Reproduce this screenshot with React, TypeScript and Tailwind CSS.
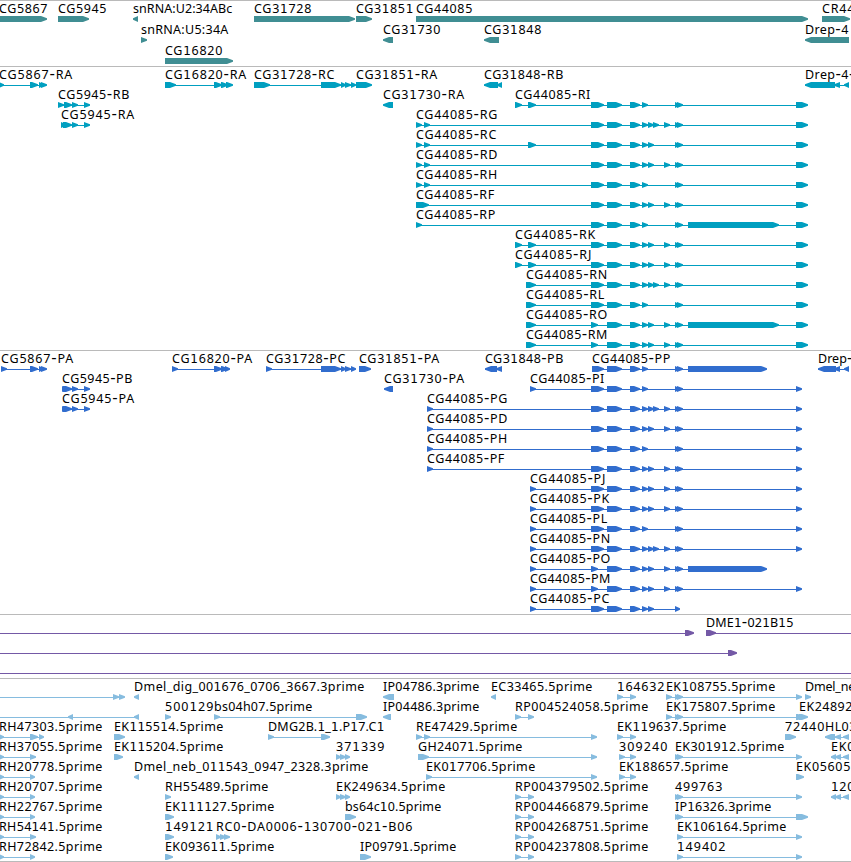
import React from "react";

/** start, end, text: the label is fitted between start and end. */
type Label = [number, number, string];
/** start, end of one exon. */
type Span = [number, number];
interface Feature {
  exons: Span[];
  reverse?: boolean;
  line?: Span;
}
interface Row {
  labels: Label[];
  features: Feature[];
}
interface Track {
  name: string;
  color: string;
  rowHeight: number;
  className: string;
  rows: Row[];
}

const fwd = (...exons: Span[]): Feature => ({ exons });
const rev = (...exons: Span[]): Feature => ({ exons, reverse: true });

const A: Span = [591, 604];
const A2: Span = [591, 598];
const B: Span = [607, 622];
const C: Span = [630, 640];
const D: Span = [642, 648];
const E: Span = [648, 654];
const F: Span = [653, 659];
const G: Span = [664, 670];
const H1: Span = [675, 680];
const H2: Span = [677, 683];
const END: Span = [796, 808];
const CDS_END: Span = [796, 802];
const BIG: Span = [688, 779];
const CDS_BIG: Span = [688, 767];
const S1: Span = [416, 422];
const S2: Span = [424, 430];
const M1: Span = [515, 522];
const M2: Span = [528, 536];
const N1: Span = [526, 536];
const P1: Span = [427, 433];
const P2: Span = [530, 536];

const row = (labels: Label[], ...features: Feature[]): Row => ({ labels, features });

const genes: Row[] = [
  row(
    [[-1, 47, "CG5867"], [58, 106, "CG5945"], [133, 232, "snRNA:U2:34ABc"], [254, 311, "CG31728"], [356, 413, "CG31851"], [416, 472, "CG44085"], [822, 854, "CR44"]],
    fwd([-9, 47]), fwd([58, 89]), rev([133, 138]), fwd([254, 355]), fwd([356, 372]), fwd([416, 808]), fwd([822, 850]),
  ),
  row(
    [[141, 228, "snRNA:U5:34A"], [383, 440, "CG31730"], [484, 541, "CG31848"], [805, 848, "Drep-4"]],
    fwd([141, 147]), rev([383, 393]), rev([484, 499]), rev([805, 849]),
  ),
  row([[165, 222, "CG16820"]], fwd([165, 233])),
];

const transcripts: Row[] = [
  row(
    [[-1, 72, "CG5867-RA"], [165, 246, "CG16820-RA"], [254, 334, "CG31728-RC"], [356, 437, "CG31851-RA"], [484, 563, "CG31848-RB"], [805, 854, "Drep-4-"]],
    fwd([-1, 4], [30, 38], [39, 44], [41, 47]),
    fwd([165, 176], [214, 222], [221, 228], [226, 233]),
    fwd([254, 270], [321, 341], [341, 346], [345, 351], [351, 356]),
    fwd([356, 372]),
    rev([484, 498], [497, 502]),
    rev([805, 835], [834, 840], [844, 849]),
  ),
  row([[58, 129, "CG5945-RB"], [383, 464, "CG31730-RA"], [515, 590, "CG44085-RI"]],
    fwd([58, 64], [64, 72], [72, 78], [84, 90]), rev([383, 393]), fwd(M1, M2, A, B, C, D, H1, H2, END)),
  row([[61, 134, "CG5945-RA"], [416, 497, "CG44085-RG"]],
    fwd([61, 66], [63, 72], [72, 78], [84, 90]), fwd(S1, S2, A, B, C, D, E, F, G, H1, H2, END)),
  row([[416, 496, "CG44085-RC"]], fwd(S1, S2, M2, A, B, C, D, E, H1, H2, END)),
  row([[416, 497, "CG44085-RD"]], fwd(S1, S2, A, B, C, D, E, G, H1, H2, END)),
  row([[416, 497, "CG44085-RH"]], fwd(S1, S2, A, B, C, D, H1, H2, END)),
  row([[416, 494, "CG44085-RF"]], fwd([416, 429], A, B, C, D, E, G, H1, H2, END)),
  row([[416, 495, "CG44085-RP"]], fwd(S1, A, B, C, D, H1, H2, BIG, END)),
  row([[515, 595, "CG44085-RK"]], fwd(M1, M2, A, B, C, D, E, G, H1, H2, END)),
  row([[515, 591, "CG44085-RJ"]], fwd(M1, M2, A, B, C, D, E, G, H1, H2, END)),
  row([[526, 607, "CG44085-RN"]], fwd(N1, A, B, C, D, E, F, G, H1, H2, END)),
  row([[526, 604, "CG44085-RL"]], fwd(N1, A, B, C, D, H1, H2, END)),
  row([[526, 607, "CG44085-RO"]], fwd(N1, A2, B, C, D, E, G, H1, H2, BIG, END)),
  row([[526, 607, "CG44085-RM"]], fwd(N1, A2, B, C, D, E, G, H1, H2, END)),
];

const proteins: Row[] = [
  row(
    [[1, 73, "CG5867-PA"], [172, 252, "CG16820-PA"], [266, 345, "CG31728-PC"], [359, 439, "CG31851-PA"], [485, 563, "CG31848-PB"], [592, 670, "CG44085-PP"], [818, 852, "Drep-"]],
    fwd([1, 7], [30, 38], [39, 44], [41, 47]),
    fwd([172, 178], [214, 222], [221, 228], [225, 230]),
    fwd([266, 272], [321, 341], [341, 346], [345, 351], [351, 356]),
    fwd([359, 371]),
    rev([485, 497], [496, 502]),
    fwd([592, 604], B, C, D, H1, H2, CDS_BIG),
    rev([818, 836], [834, 840], [844, 849]),
  ),
  row([[62, 132, "CG5945-PB"], [384, 464, "CG31730-PA"], [530, 604, "CG44085-PI"]],
    fwd([62, 67], [63, 72], [72, 78], [84, 90]), rev([384, 393]), fwd(P2, A, B, C, D, H1, H2, CDS_END)),
  row([[62, 134, "CG5945-PA"], [427, 507, "CG44085-PG"]],
    fwd([62, 67], [63, 72], [72, 78], [84, 90]), fwd(P1, A, B, C, D, E, F, G, H1, H2, CDS_END)),
  row([[427, 507, "CG44085-PD"]], fwd(P1, A, B, C, D, E, G, H1, H2, CDS_END)),
  row([[427, 507, "CG44085-PH"]], fwd(P1, A, B, C, D, H1, H2, CDS_END)),
  row([[427, 504, "CG44085-PF"]], fwd(P1, A, B, C, D, E, G, H1, H2, CDS_END)),
  row([[530, 605, "CG44085-PJ"]], fwd(P2, A, B, C, D, E, G, H1, H2, CDS_END)),
  row([[530, 609, "CG44085-PK"]], fwd(P2, A, B, C, D, E, G, H1, H2, CDS_END)),
  row([[530, 607, "CG44085-PL"]], fwd(P2, A, B, C, D, H1, H2, CDS_END)),
  row([[530, 610, "CG44085-PN"]], fwd(P2, A, B, C, D, E, F, G, H1, H2, CDS_END)),
  row([[530, 610, "CG44085-PO"]], fwd(P2, A2, B, C, D, E, G, H1, H2, CDS_BIG)),
  row([[530, 610, "CG44085-PM"]], fwd(P2, A2, B, C, D, E, G, H1, H2, CDS_END)),
  row([[530, 609, "CG44085-PC"]], fwd(P2, A, B, C, D, E, H1)),
];

const clones: Row[] = [
  row([[706, 793, "DME1-021B15"]],
    { exons: [[685, 694]], line: [0, 690] }, { exons: [[706, 716]], line: [710, 851] }),
  row([], { exons: [[728, 737]], line: [0, 733] }),
  row([], { exons: [], line: [0, 851] }),
];

const R1: Feature = fwd([515, 521], [528, 534]);
const K1: Feature = fwd([617, 623], [630, 636]);
const K2: Feature = fwd([619, 625], [630, 636]);
const HOME: Span = [-1, 4];

const ests: Row[] = [
  row(
    [[134, 364, "Dmel_dig_001676_0706_3667.3prime"], [383, 479, "IP04786.3prime"], [491, 592, "EC33465.5prime"], [617, 664, "164632"], [666, 775, "EK108755.5prime"], [805, 855, "Dmel_ne"]],
    { exons: [[113, 119], [119, 125]], line: [0, 121] }, rev([134, 139]), rev([383, 394]), rev([491, 496]), K1,
    fwd([666, 672], [675, 680], [677, 683], [796, 802]), fwd([805, 811]),
  ),
  row(
    [[165, 213, "500129"], [214, 312, "bs04h07.5prime"], [383, 479, "IP04486.3prime"], [515, 648, "RP004524058.5prime"], [666, 775, "EK175807.5prime"], [799, 852, "EK24892"]],
    { exons: [[68, 73], [134, 139]], reverse: true, line: [0, 136] }, fwd([165, 171]), fwd([214, 220], [356, 367]), rev([383, 391]), R1,
    fwd([666, 672], [675, 680], [677, 683], [796, 804], [799, 808]),
  ),
  row(
    [[-1, 102, "RH47303.5prime"], [114, 223, "EK115514.5prime"], [268, 384, "DMG2B.1_1.P17.C1"], [416, 517, "RE47429.5prime"], [617, 726, "EK119637.5prime"], [785, 824, "72440"], [825, 856, "HL03"]],
    fwd(HOME, [30, 38], [39, 44]), fwd([114, 125]), fwd([268, 274], [321, 330]), fwd([416, 422], [424, 430], [591, 597]), K1,
    fwd([785, 796]), rev([825, 835], [835, 841], [843, 849]),
  ),
  row(
    [[-1, 102, "RH37055.5prime"], [114, 223, "EK115204.5prime"], [336, 384, "371339"], [418, 522, "GH24071.5prime"], [619, 667, "309240"], [675, 784, "EK301912.5prime"], [831, 854, "EK0"]],
    fwd(HOME, [30, 36]), fwd([114, 123]), fwd([336, 341], [340, 346], [345, 350]), fwd([418, 429], [591, 597]), K2,
    fwd([675, 680], [677, 683], [796, 802]), rev([831, 836], [835, 841], [843, 849]),
  ),
  row(
    [[-1, 102, "RH20778.5prime"], [134, 368, "Dmel_neb_011543_0947_2328.3prime"], [426, 535, "EK017706.5prime"], [619, 728, "EK188657.5prime"], [796, 850, "EK05605"]],
    fwd(HOME, [30, 35]), rev([134, 139]), fwd([426, 432], [591, 597]), K2, fwd([796, 804]),
  ),
  row(
    [[-1, 102, "RH20707.5prime"], [165, 268, "RH55489.5prime"], [336, 445, "EK249634.5prime"], [515, 648, "RP004379502.5prime"], [675, 722, "499763"], [831, 854, "120"]],
    fwd(HOME, [30, 35]), fwd([165, 171]), fwd([336, 341], [340, 346], [345, 350]), R1,
    fwd([675, 680], [677, 683], [796, 802]), rev([831, 836], [835, 841], [843, 849]),
  ),
  row(
    [[-1, 102, "RH22767.5prime"], [165, 274, "EK111127.5prime"], [345, 441, "bs64c10.5prime"], [515, 648, "RP004466879.5prime"], [675, 771, "IP16326.3prime"]],
    fwd(HOME, [30, 35]), fwd([165, 174]), fwd([345, 356]), R1, fwd([675, 680], [677, 683], [796, 808]),
  ),
  row(
    [[-1, 102, "RH54141.5prime"], [165, 213, "149121"], [216, 412, "RC0-DA0006-130700-021-B06"], [515, 648, "RP004268751.5prime"], [677, 786, "EK106164.5prime"]],
    fwd(HOME, [30, 36]), fwd([165, 174]), fwd([216, 221], [220, 226], [224, 230]), R1, fwd([677, 683], [796, 802]),
  ),
  row(
    [[-1, 102, "RH72842.5prime"], [165, 274, "EK093611.5prime"], [360, 456, "IP09791.5prime"], [515, 648, "RP004237808.5prime"], [677, 725, "149402"]],
    fwd(HOME, [30, 35]), fwd([165, 173]), fwd([360, 371]), R1, fwd([677, 683], [796, 802]),
  ),
];

const tracks: Track[] = [
  { name: "genes", color: "#408e93", rowHeight: 21, className: "h-[66px]", rows: genes },
  { name: "transcripts", color: "#009fc0", rowHeight: 20, className: "h-[284px]", rows: transcripts },
  { name: "proteins", color: "#316dce", rowHeight: 20, className: "h-[264px]", rows: proteins },
  { name: "clones", color: "#7459a6", rowHeight: 20, className: "h-[64px]", rows: clones },
  { name: "ests", color: "#86bcdf", rowHeight: 20, className: "h-[184px] border-b", rows: ests },
];

/** Closed outline of an exon: a box whose leading end narrows to a blunt point. */
function outline([start, end]: Span, reverse?: boolean): string {
  const head = Math.min(6, end - start);
  return reverse
    ? `M${end} 14H${start + head}L${start} 16.2V17.8L${start + head} 20H${end}Z`
    : `M${start} 14H${end - head}L${end} 16.2V17.8L${end - head} 20H${start}Z`;
}

function FeatureGlyph({ feature }: { feature: Feature }) {
  const { exons, reverse, line } = feature;
  const from = line ? line[0] : exons[0][0];
  const to = line ? line[1] : exons[exons.length - 1][1] - 1;
  return (
    <g>
      {(line || exons.length > 1) && <rect x={from} y={17} width={to - from} height={1} shapeRendering="crispEdges" />}
      {exons.map((exon, i) => (
        <path key={i} d={outline(exon, reverse)} />
      ))}
    </g>
  );
}

/** Hyphens are drawn wide and the digit one with a foot, the rest in a light humanist face. */
function FeatureLabel({ label }: { label: Label }) {
  const [start, end, text] = label;
  return (
    <text
      x={start}
      y={11}
      textLength={end - start + 0.3}
      className="fill-black font-['Noto_Sans',sans-serif] text-[12.5px]"
    >
      {text.split(/([1-])/).map((part, i) =>
        part === "-" ? (
          <tspan key={i} className="font-['DejaVu_Sans',sans-serif] text-[15px]">-</tspan>
        ) : part === "1" ? (
          <tspan key={i} className="font-['DejaVu_Sans',sans-serif] text-[12px]">1</tspan>
        ) : (
          part
        ),
      )}
    </text>
  );
}

export default function App() {
  return (
    <main className="flex h-[862px] w-[851px] flex-col overflow-hidden bg-white">
      {tracks.map((track) => (
        <section key={track.name} className={`shrink-0 border-t border-[#bababa] pt-px ${track.className}`}>
          {track.rows.map((r, i) => (
            <svg
              key={i}
              width={851}
              height={track.rowHeight}
              viewBox={`0 0 851 ${track.rowHeight}`}
              fill={track.color}
              className="block overflow-visible"
            >
              {r.features.map((feature, k) => (
                <FeatureGlyph key={k} feature={feature} />
              ))}
              {r.labels.map((label) => (
                <FeatureLabel key={label[2]} label={label} />
              ))}
            </svg>
          ))}
        </section>
      ))}
    </main>
  );
}
